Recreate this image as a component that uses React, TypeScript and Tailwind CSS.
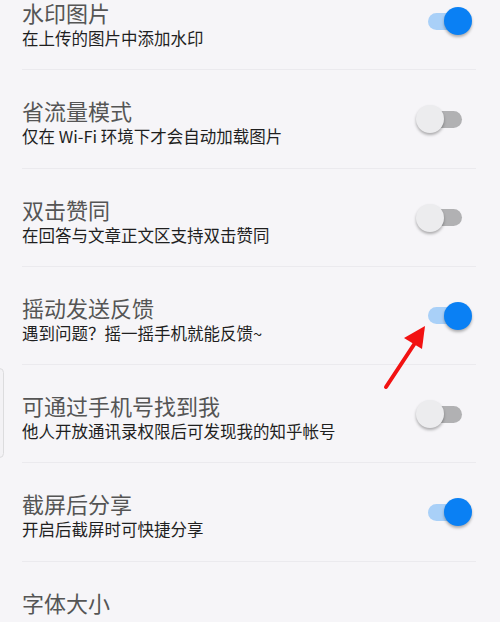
import { useState } from 'react';

type Setting = {
    title: string;
    desc?: string;
    on?: boolean;
};

const SETTINGS: Setting[] = [
    { title: '水印图片', desc: '在上传的图片中添加水印', on: true },
    { title: '省流量模式', desc: '仅在 Wi-Fi 环境下才会自动加载图片', on: false },
    { title: '双击赞同', desc: '在回答与文章正文区支持双击赞同', on: false },
    { title: '摇动发送反馈', desc: '遇到问题？摇一摇手机就能反馈~', on: true },
    { title: '可通过手机号找到我', desc: '他人开放通讯录权限后可发现我的知乎帐号', on: false },
    { title: '截屏后分享', desc: '开启后截屏时可快捷分享', on: true },
    { title: '字体大小' },
];

// knob overlaps the track: track first when on, knob first when off
const Toggle = ({ on, onChange }: { on: boolean; onChange: () => void }) => (
    <button
        type="button"
        onClick={onChange}
        className="mt-[35px] mr-[4px] flex h-[28px] w-[56px] shrink-0 items-center"
    >
        {on ? (
            <>
                <span className="ml-[12px] h-[17px] w-[30px] rounded-l-full bg-[#a9d0f8]" />
                <span className="-ml-[14px] h-[28px] w-[28px] rounded-full bg-[#0a80f4] shadow-[0_2px_3px_rgba(0,0,0,0.3)]" />
            </>
        ) : (
            <>
                <span className="relative z-10 h-[28px] w-[28px] rounded-full bg-[#ececee] shadow-[0_2px_3px_rgba(0,0,0,0.3)]" />
                <span className="-ml-[16px] h-[17px] w-[34px] rounded-full bg-[#b1b1b3]" />
            </>
        )}
    </button>
);

const SettingRow = ({ item, onToggle }: { item: Setting; onToggle: () => void }) => (
    <div className="mx-[22px] mr-[24px] flex h-[98.3px] shrink-0 items-start border-b border-[#ebeaee]">
        <div className="flex-1 pt-[27px]">
            <div className="text-[22px] leading-[26px] text-[#555555]">{item.title}</div>
            {item.desc && (
                <div className="text-[16.5px] leading-[26px] text-[#1f1f1f]">{item.desc}</div>
            )}
        </div>
        {item.on !== undefined && <Toggle on={item.on} onChange={onToggle} />}
    </div>
);

export default function App() {
    const [items, setItems] = useState(SETTINGS);

    const toggle = (i: number) =>
        setItems((prev) => prev.map((s, j) => (j === i ? { ...s, on: !s.on } : s)));

    return (
        <div
            className="relative h-[622px] w-[500px] overflow-hidden bg-[#f6f5f8]"
            style={{ fontFamily: '"Noto Sans CJK SC", "Noto Sans", sans-serif' }}
        >
            <div className="-mt-[28px] flex flex-col">
                {items.map((item, i) => (
                    <SettingRow key={item.title} item={item} onToggle={() => toggle(i)} />
                ))}
            </div>

            {/* edge handle on the left */}
            <div className="absolute left-[-5px] top-[368px] h-[90px] w-[9px] rounded-md border border-[#dcdcde] bg-[#f3f2f5]" />

            {/* red pointer arrow */}
            <svg className="pointer-events-none absolute left-0 top-0" width="500" height="622">
                <line x1="386" y1="387" x2="415" y2="343" stroke="#f21212" strokeWidth="4" strokeLinecap="round" />
                <polygon points="425,326 404,338 422,349" fill="#f21212" />
            </svg>
        </div>
    );
}
